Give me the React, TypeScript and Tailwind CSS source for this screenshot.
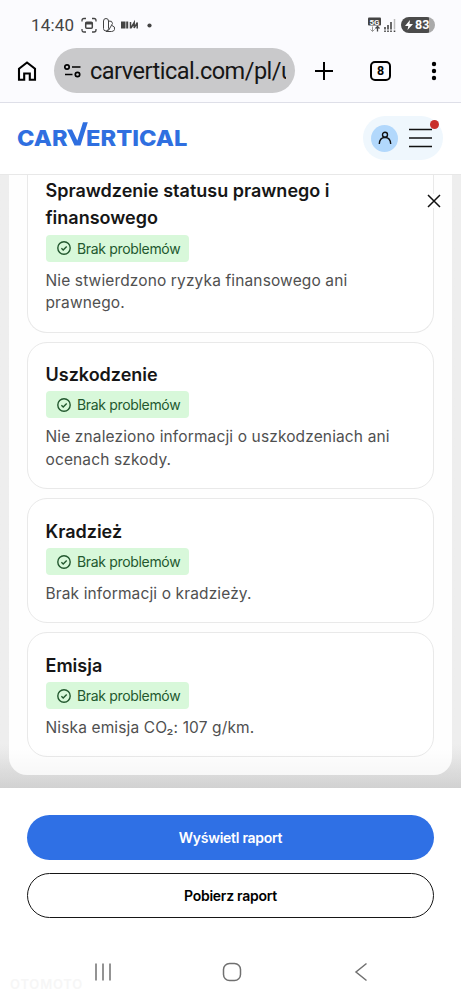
import React from "react";

interface CheckProps {
  title: string;
  children: React.ReactNode;
  className: string;
}

function CheckCard({ title, children, className }: CheckProps) {
  return (
    <li
      className={`flex flex-col items-start rounded-[20px] border border-[#e9e9e9] bg-white px-[17.5px] ${className}`}
    >
      <h3 className="w-[310px] text-[18px] leading-[27px] font-semibold text-[#161616]">
        {title}
      </h3>
      <div className="mt-[3.5px] flex h-[27px] w-[143.5px] shrink-0 items-center rounded bg-[#d8f8da] pl-[11px] text-[#23582f]">
        <svg width="14" height="14" viewBox="0 0 14 14" fill="none" stroke="currentColor" strokeWidth="1.4">
          <circle cx="7" cy="7" r="6.2" />
          <path d="M4.4 7.2l1.8 1.7 3.5-3.5" />
        </svg>
        <span className="ml-[6.5px] text-[14px] tracking-[-0.33px] whitespace-nowrap">Brak problemów</span>
      </div>
      <p className="mt-[8px] text-[15.5px] leading-[22.5px] tracking-[0.13px] whitespace-nowrap text-[#505050]">
        {children}
      </p>
    </li>
  );
}

function StatusBar() {
  return (
    <div className="flex h-[50px] items-center pl-[31px] text-[#444]">
      <span className="mt-px w-[50px] font-[Roboto] text-[17px] tracking-[0.2px]">14:40</span>
      <svg width="72" height="18" viewBox="0 0 72 18" fill="none" stroke="currentColor" strokeWidth="1.3">
        <path d="M1 5.500V4.500Q1 2.500 3 2.500H5M11 2.500h2q2 0 2 2v1M15 13v1q0 2-2 2h-2M5 16H3q-2 0-2-2v-1" />
        <rect x="4.700" y="6.200" width="6.600" height="6" rx="1" strokeWidth="1.500" />
        <path d="M4.700 6h6.600v2.500H4.700z" fill="currentColor" stroke="none" />
        <rect x="22.5" y="2.500" width="5" height="12.500" rx="2.5" strokeWidth="1" />
        <path d="M27.500 5q4-.5 4 2.500l-4 7" strokeWidth="1" />
        <path d="M31 9.500q3.500 1 2.500 4-.5 2-3 2h-5.500" strokeWidth="1" />
        <path d="M40 5.5h4.500v7h-4.500zM45.200 5.5h2v7h-2z" fill="currentColor" stroke="none" />
        <path d="M49.500 12.500v-6.500M50 12l3.200-5.500v5.500l3-5.500v6" strokeWidth="1.5" />
        <circle cx="68.5" cy="9.500" r="2.1" fill="currentColor" stroke="none" />
      </svg>
      <div className="mr-[26px] ml-auto flex items-center">
        <svg width="30" height="18" viewBox="0 0 30 18">
          <rect x="0" y="1.500" width="13" height="8" rx="1" fill="#444" />
          <text x="6.5" y="8.500" textAnchor="middle" className="font-[Roboto] text-[8px] font-bold" fill="#fff">
            5G
          </text>
          <path d="M4.500 10.500v5M2.500 13.500l2 2 2-2" fill="none" stroke="#999" />
          <path d="M9.500 15.500v-5M7.500 12.500l2-2 2 2" fill="none" stroke="#444" strokeWidth="1.3" />
          <path d="M17 11v2.5M20 9v4.5M23 6v7.5M17 14.5v1.5M20 14.5v1.5M23 14.5v1.5M26.5 14.5v1.5" stroke="#444" strokeWidth="1.6" />
          <path d="M26.5 3v10.5" stroke="#bbb" strokeWidth="1.5" />
        </svg>
        <div className="ml-[3px] flex h-4 w-[34px] items-center rounded-full bg-linear-to-r from-[#4b4b4b] from-83% to-[#aaa] to-83% pl-1 text-white">
          <svg width="8" height="10" viewBox="0 0 8 10" fill="currentColor">
            <path d="M5 0L0 6h3.3L2.5 10 8 4H4.5z" />
          </svg>
          <span className="ml-[2px] font-[Roboto] text-[12.5px] leading-4 font-bold">83</span>
        </div>
      </div>
    </div>
  );
}

function BrowserBar() {
  return (
    <div className="flex h-[52px] text-black">
      <svg className="mt-[10px] ml-[17px]" width="20" height="22" viewBox="0 0 20 22" fill="none" stroke="currentColor" strokeWidth="2.1">
        <path d="M2 8.8L10 2.5l8 6.3v11h-5.2v-6.3H7.2v6.3H2z" />
      </svg>
      <div className="-mt-[2px] ml-[17px] flex h-[45px] w-[241px] items-center rounded-full bg-[#c9c9cb] pl-[10px]">
        <svg className="shrink-0" width="18" height="16" viewBox="0 0 18 16" fill="none" stroke="currentColor" strokeWidth="1.7">
          <circle cx="3" cy="4" r="2.2" />
          <path d="M8 4h8.500M1 11.500h7.500" />
          <circle cx="13.5" cy="11.500" r="2.2" />
        </svg>
        <div className="ml-2 w-[195.5px] overflow-hidden font-[Roboto] text-[23.5px] leading-[34px] tracking-[-0.5px] whitespace-nowrap text-[#161616]">
          carvertical.com/pl/u
        </div>
      </div>
      <svg className="mt-[11px] ml-5" width="18" height="20" viewBox="0 0 18 20" stroke="currentColor" strokeWidth="2">
        <path d="M9 1v18M0 10h18" />
      </svg>
      <div className="mt-[11px] ml-[37px] flex h-5 w-[21px] items-center justify-center rounded-[5px] border-2 border-black font-[Roboto] text-[12.5px] font-bold">
        8
      </div>
      <svg className="mt-[11px] ml-10" width="6" height="20" viewBox="0 0 6 20" fill="currentColor">
        <circle cx="3" cy="3" r="2.2" />
        <circle cx="3" cy="10" r="2.2" />
        <circle cx="3" cy="17" r="2.2" />
      </svg>
    </div>
  );
}

function SiteHeader() {
  return (
    <header className="flex h-[73px] items-center border-t border-b border-t-[#dedfe8] border-b-[#e8e8e8] bg-white pl-[17px]">
      <svg className="mt-[19px] self-start" width="172" height="28" viewBox="0 0 172 28" fill="#2f6fe0" aria-label="carVertical">
        <g className="font-[Inter] text-[22px] font-extrabold">
          <text x="0" y="23.500" textLength="50.500" lengthAdjust="spacingAndGlyphs">CAR</text>
          <text x="69" y="23.500" textLength="101.500" lengthAdjust="spacingAndGlyphs">ERTICAL</text>
        </g>
        <path d="M50 7.500h5L60.300 18.500 66 .3h4.800L63.500 23.500h-6z" />
      </svg>
      <div className="relative mr-[18px] mb-px ml-auto flex h-[44px] w-[80px] items-center rounded-full bg-[#eff7fd] pl-2">
        <div className="flex size-[27px] items-center justify-center rounded-full bg-[#b2d8fc]">
          <svg width="14" height="14" viewBox="0 0 14 14" fill="none" stroke="#111" strokeWidth="1.4">
            <circle cx="7" cy="3.800" r="2.500" />
            <path d="M1.300 13Q1.600 6.500 7 6.500T12.700 13" />
          </svg>
        </div>
        <svg className="ml-[11px]" width="24" height="20" viewBox="0 0 24 20" stroke="#111" strokeWidth="1.7">
          <path d="M0 1.500h23M0 10h23M0 18.500h23" />
        </svg>
        <span className="absolute top-1 right-1 size-[9px] rounded-full bg-[#c9302c]" />
      </div>
    </header>
  );
}

function App() {
  return (
    <div className="flex h-[999px] w-[461px] flex-col overflow-hidden bg-[#fbfbfe] font-[Inter]">
      <StatusBar />
      <BrowserBar />
      <SiteHeader />
      <main className="relative h-[613px] shrink-0 overflow-hidden bg-[#eee] bg-linear-to-t from-[#dadada] to-[#eee] to-[44px] px-[9px]">
        <ul className="flex h-[600px] flex-col gap-[9px] rounded-b-[18px] bg-[#fefefe] px-[18px]">
          <CheckCard title="Sprawdzenie statusu prawnego i finansowego" className="h-[157.5px] rounded-t-none border-t-0 pt-[2px]">
            Nie stwierdzono ryzyka finansowego ani
            <br />
            prawnego.
          </CheckCard>
          <CheckCard title="Uszkodzenie" className="h-[147.5px] pt-[18px]">
            Nie znaleziono informacji o uszkodzeniach ani
            <br />
            ocenach szkody.
          </CheckCard>
          <CheckCard title="Kradzież" className="h-[125px] pt-[18.5px]">
            Brak informacji o kradzieży.
          </CheckCard>
          <CheckCard title="Emisja" className="h-[125px] pt-[18.5px]">
            Niska emisja CO₂: 107 g/km.
          </CheckCard>
        </ul>
        <svg className="absolute top-[19px] right-[20px] bg-white" width="14" height="14" viewBox="0 0 14 14" stroke="#111" strokeWidth="1.5">
          <path d="M1 1l12 12M13 1L1 13" />
        </svg>
        <div className="absolute inset-x-0 bottom-0 h-10 bg-linear-to-t from-black/4 to-transparent" />
      </main>
      <footer className="flex grow flex-col bg-white">
        <div className="flex flex-col gap-[13px] px-[27px] pt-[27px] text-[14px] font-semibold tracking-[-0.27px]">
          <button className="h-[45px] rounded-full bg-[#2f70e5] text-white">Wyświetl raport</button>
          <button className="h-[45px] rounded-full border-[1.5px] border-[#161616] text-black">Pobierz raport</button>
        </div>
        <nav className="relative mt-[44px] flex text-[#707070]">
          <svg className="ml-[94px]" width="18" height="20" viewBox="0 0 18 20" stroke="currentColor" strokeWidth="1.5">
            <path d="M2 1.500v17M9 1.500v17M16 1.500v17" />
          </svg>
          <svg className="ml-[110px]" width="20" height="20" viewBox="0 0 20 20" fill="none" stroke="currentColor" strokeWidth="1.5">
            <rect x="1.500" y="1.500" width="17" height="17" rx="6" />
          </svg>
          <svg className="ml-[112px]" width="14" height="20" viewBox="0 0 14 20" fill="none" stroke="currentColor" strokeWidth="1.5">
            <path d="M12.500 1.500L2 10l10.500 8.500" />
          </svg>
          <span className="absolute top-[14px] left-[10px] text-[13px] leading-4 font-semibold tracking-[0.8px] text-[#f6f6f6]">OTOMOTO</span>
        </nav>
      </footer>
    </div>
  );
}

export default App;
